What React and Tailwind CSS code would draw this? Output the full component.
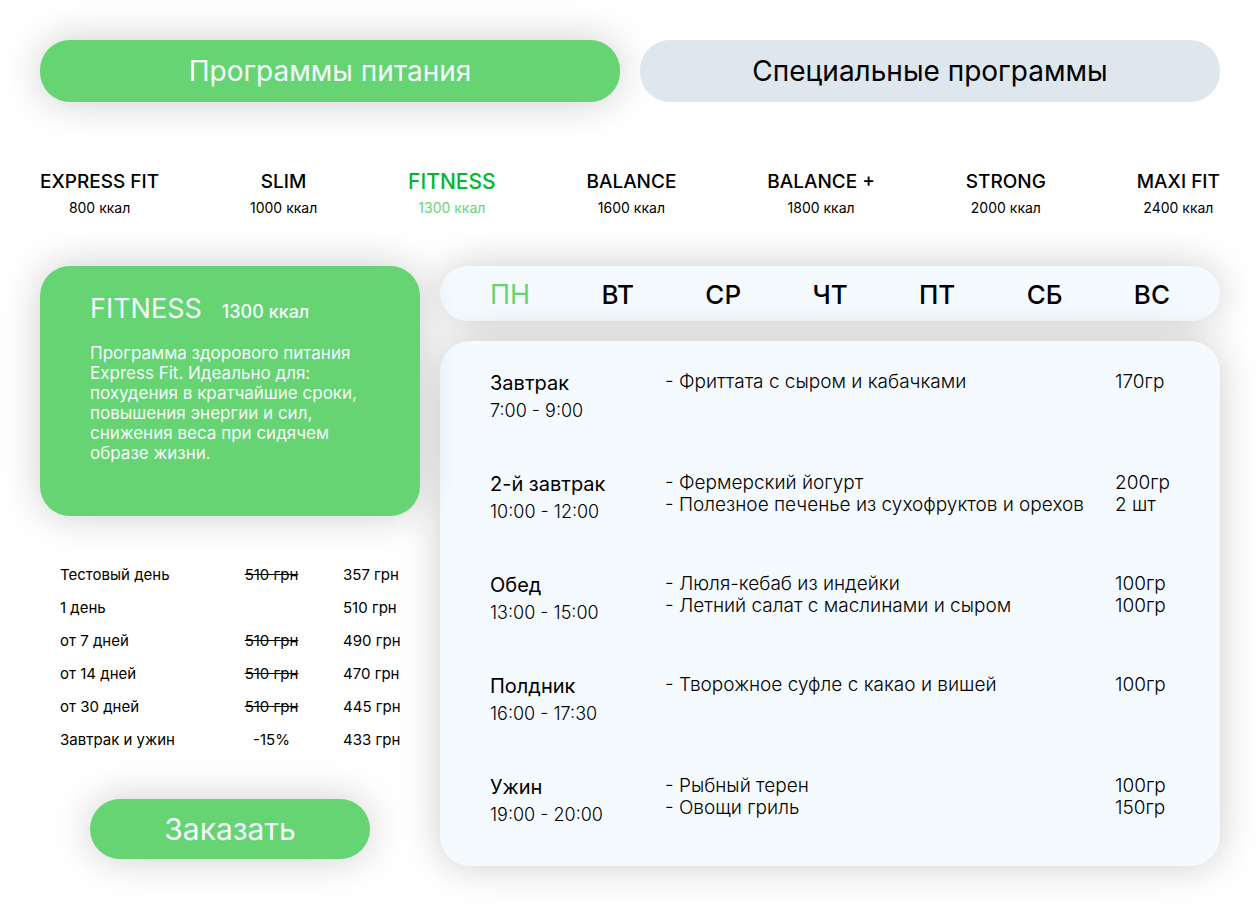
import { useState } from "react";

const tabs = ["Программы питания", "Специальные программы"];

const programs = [
  { name: "EXPRESS FIT", kcal: 800 },
  { name: "SLIM", kcal: 1000 },
  { name: "FITNESS", kcal: 1300 },
  { name: "BALANCE", kcal: 1600 },
  { name: "BALANCE +", kcal: 1800 },
  { name: "STRONG", kcal: 2000 },
  { name: "MAXI FIT", kcal: 2400 },
];

const prices = [
  { term: "Тестовый день", old: "510 грн", price: "357 грн" },
  { term: "1 день", price: "510 грн" },
  { term: "от 7 дней", old: "510 грн", price: "490 грн" },
  { term: "от 14 дней", old: "510 грн", price: "470 грн" },
  { term: "от 30 дней", old: "510 грн", price: "445 грн" },
  { term: "Завтрак и ужин", discount: "-15%", price: "433 грн" },
];

const days = ["ПН", "ВТ", "СР", "ЧТ", "ПТ", "СБ", "ВС"];

const meals = [
  { name: "Завтрак", time: "7:00 - 9:00", items: [["Фриттата с сыром и кабачками", "170гр"]] },
  {
    name: "2-й завтрак",
    time: "10:00 - 12:00",
    items: [
      ["Фермерский йогурт", "200гр"],
      ["Полезное печенье из сухофруктов и орехов", "2 шт"],
    ],
  },
  {
    name: "Обед",
    time: "13:00 - 15:00",
    items: [
      ["Люля-кебаб из индейки", "100гр"],
      ["Летний салат с маслинами и сыром", "100гр"],
    ],
  },
  { name: "Полдник", time: "16:00 - 17:30", items: [["Творожное суфле с какао и вишей", "100гр"]] },
  {
    name: "Ужин",
    time: "19:00 - 20:00",
    items: [
      ["Рыбный терен", "100гр"],
      ["Овощи гриль", "150гр"],
    ],
  },
];

const shadow = "shadow-[0_0_40px_rgba(0,0,0,0.2)]";

function Tabs() {
  const [active, setActive] = useState(0);
  return (
    <nav className="grid grid-cols-2 gap-5">
      {tabs.map((tab, i) => (
        <button
          key={tab}
          type="button"
          onClick={() => setActive(i)}
          className={`h-[62px] rounded-[30px] text-[28px] leading-8 ${
            i === active ? `bg-[#66d472] text-[#f5faff] ${shadow}` : "bg-[#dee6ee] text-black"
          }`}
        >
          {tab}
        </button>
      ))}
    </nav>
  );
}

function Programs() {
  const [active, setActive] = useState(2);
  return (
    <nav className="mt-[68px] flex justify-between">
      {programs.map((p, i) => (
        <button
          key={p.name}
          type="button"
          onClick={() => setActive(i)}
          className="flex flex-col items-center gap-1"
        >
          <span
            className={`leading-6 font-medium ${i === active ? "text-[21px] text-[#00b82b]" : "text-[19px] text-black"}`}
          >
            {p.name}
          </span>
          <span className={`text-[14px] leading-5 ${i === active ? "text-[#66d472]" : "text-black"}`}>
            {p.kcal} ккал
          </span>
        </button>
      ))}
    </nav>
  );
}

function Description() {
  return (
    <section className={`rounded-[30px] bg-[#66d472] px-[50px] pt-[27px] pb-[53px] text-[#f5faff] ${shadow}`}>
      <h2 className="flex items-baseline gap-5 text-[27px] leading-8">
        FITNESS <span className="text-[18px] leading-6 font-medium">1300 ккал</span>
      </h2>
      <p className="mt-[18px] text-[17px] leading-5">
        Программа здорового питания Express Fit. Идеально для: похудения в кратчайшие сроки, повышения энергии и
        сил, снижения веса при сидячем образе жизни.
      </p>
    </section>
  );
}

function Prices() {
  return (
    <table className="mt-[42px] ml-5 w-[350px] table-fixed text-left text-[15px] leading-5">
      <tbody>
        {prices.map((row) => (
          <tr key={row.term} className="h-[33px]">
            <th scope="row" className="w-[140px] font-normal">
              {row.term}
            </th>
            <td className="text-center">
              {row.old ? <s>{row.old}</s> : row.discount}
            </td>
            <td className="w-[67px] whitespace-nowrap">{row.price}</td>
          </tr>
        ))}
      </tbody>
    </table>
  );
}

function Days() {
  const [active, setActive] = useState(0);
  return (
    <nav
      className={`flex h-[55px] items-center justify-between rounded-[30px] bg-[#f5faff] px-[50px] pt-0.5 ${shadow}`}
    >
      {days.map((day, i) => (
        <button
          key={day}
          type="button"
          onClick={() => setActive(i)}
          className={`leading-8 ${i === active ? "text-[27px] text-[#66d472]" : "text-[26px] font-medium text-black"}`}
        >
          {day}
        </button>
      ))}
    </nav>
  );
}

function Menu() {
  return (
    <section className={`mt-5 rounded-[30px] bg-[#f5faff] px-[50px] pt-[30px] ${shadow}`}>
      <table className="w-full table-fixed text-left text-[19px] leading-[22px] font-light">
        <tbody>
          {meals.map((meal) => (
            <tr key={meal.name} className="group align-top">
              <th scope="row" className="w-[175px] pb-[50px] font-light group-last:pb-10">
                <div className="text-[20px] leading-6 font-normal">{meal.name}</div>
                <div className="mt-[5px] text-[18px] leading-[22px]">{meal.time}</div>
              </th>
              <td>
                {meal.items.map(([dish]) => (
                  <div key={dish} className="whitespace-nowrap">
                    - {dish}
                  </div>
                ))}
              </td>
              <td className="w-[55px] whitespace-nowrap">
                {meal.items.map(([dish, amount]) => (
                  <div key={dish}>{amount}</div>
                ))}
              </td>
            </tr>
          ))}
        </tbody>
      </table>
    </section>
  );
}

export default function App() {
  return (
    <div className="bg-white p-10 font-['Inter',sans-serif] text-black">
      <Tabs />
      <Programs />
      <main className="mt-12 grid grid-cols-[380px_minmax(0,1fr)] gap-5">
        <div className="z-10 flex flex-col">
          <Description />
          <Prices />
          <button
            type="button"
            className={`mx-[50px] mt-[43px] h-[60px] rounded-[30px] bg-[#66d472] text-[30px] leading-8 text-[#f5faff] ${shadow}`}
          >
            Заказать
          </button>
        </div>
        <div>
          <Days />
          <Menu />
        </div>
      </main>
    </div>
  );
}
